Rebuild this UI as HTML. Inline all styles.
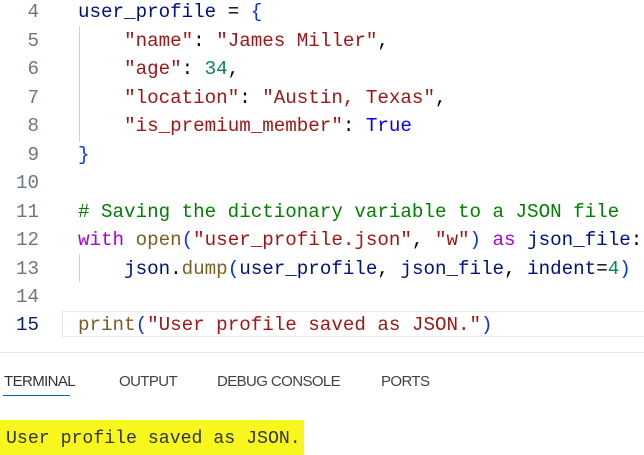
<!DOCTYPE html>
<html><head><style>
body{margin:0;width:644px;height:455px;background:#fff;overflow:hidden;position:relative;font-family:"Liberation Mono",monospace}
.l{position:absolute;left:0;height:28px;line-height:28px;font-size:19.2px;white-space:pre;width:644px}
.n{position:absolute;right:605px;color:#6e7681;text-align:right}
.c{position:absolute;left:78px;color:#001080}
.s{color:#a31515}.k{color:#af00db}.m{color:#098658}.cm{color:#008000}.t{color:#0000ff}.f{color:#795e26}.b{color:#0431fa}.p{color:#000}
.g{position:absolute;left:79px;width:1px;background:#d0d0d0}
.tab{position:absolute;top:373px;font-family:"Liberation Sans",sans-serif;font-size:15px;color:#424242;letter-spacing:-0.6px}
</style></head><body>
<div class="g" style="top:26px;height:116px"></div>
<div class="g" style="top:254px;height:28px"></div>
<div style="position:absolute;left:62px;top:311px;width:590px;height:26px;border:1px solid #e8e8e8;box-sizing:border-box;"></div>
<div class="l" style="top:-2px"><span class="n">4</span><span class="c">user_profile <span class="p">=</span> <span class="b">{</span></span></div>
<div class="l" style="top:26.5px"><span class="n">5</span><span class="c">    <span class="s">"name"</span><span class="p">:</span> <span class="s">"James Miller"</span><span class="p">,</span></span></div>
<div class="l" style="top:55px"><span class="n">6</span><span class="c">    <span class="s">"age"</span><span class="p">:</span> <span class="m">34</span><span class="p">,</span></span></div>
<div class="l" style="top:83.5px"><span class="n">7</span><span class="c">    <span class="s">"location"</span><span class="p">:</span> <span class="s">"Austin, Texas"</span><span class="p">,</span></span></div>
<div class="l" style="top:112px"><span class="n">8</span><span class="c">    <span class="s">"is_premium_member"</span><span class="p">:</span> <span class="t">True</span></span></div>
<div class="l" style="top:140.5px"><span class="n">9</span><span class="c"><span class="b">}</span></span></div>
<div class="l" style="top:169px"><span class="n">10</span></div>
<div class="l" style="top:197.5px"><span class="n">11</span><span class="c cm"># Saving the dictionary variable to a JSON file</span></div>
<div class="l" style="top:226px"><span class="n">12</span><span class="c"><span class="k">with</span> <span class="f">open</span><span class="b">(</span><span class="s">"user_profile.json"</span><span class="p">,</span> <span class="s">"w"</span><span class="b">)</span> <span class="k">as</span> json_file<span class="p">:</span></span></div>
<div class="l" style="top:254.5px"><span class="n">13</span><span class="c">    json<span class="p">.</span><span class="f">dump</span><span class="b">(</span>user_profile<span class="p">,</span> json_file<span class="p">,</span> indent<span class="p">=</span><span class="m">4</span><span class="b">)</span></span></div>
<div class="l" style="top:283px"><span class="n">14</span></div>
<div class="l" style="top:311px"><span class="n" style="color:#0b216f">15</span><span class="c"><span class="f">print</span><span class="b">(</span><span class="s">"User profile saved as JSON."</span><span class="b">)</span></span></div>
<div style="position:absolute;left:0;top:352px;width:644px;height:1px;background:#e5e5e5"></div>
<div class="tab" style="left:4px;color:#333">TERMINAL</div>
<div class="tab" style="left:119px">OUTPUT</div>
<div class="tab" style="left:217px">DEBUG CONSOLE</div>
<div class="tab" style="left:381px">PORTS</div>
<div style="position:absolute;left:3px;top:395px;width:67px;height:1px;background:#005fb8"></div>
<div style="position:absolute;left:0;top:420px;width:304px;height:35px;background:#f7f71d"></div>
<div style="position:absolute;left:6px;top:427px;font-size:18.2px;line-height:24px;color:#333;white-space:pre">User profile saved as JSON.</div>
</body></html>
